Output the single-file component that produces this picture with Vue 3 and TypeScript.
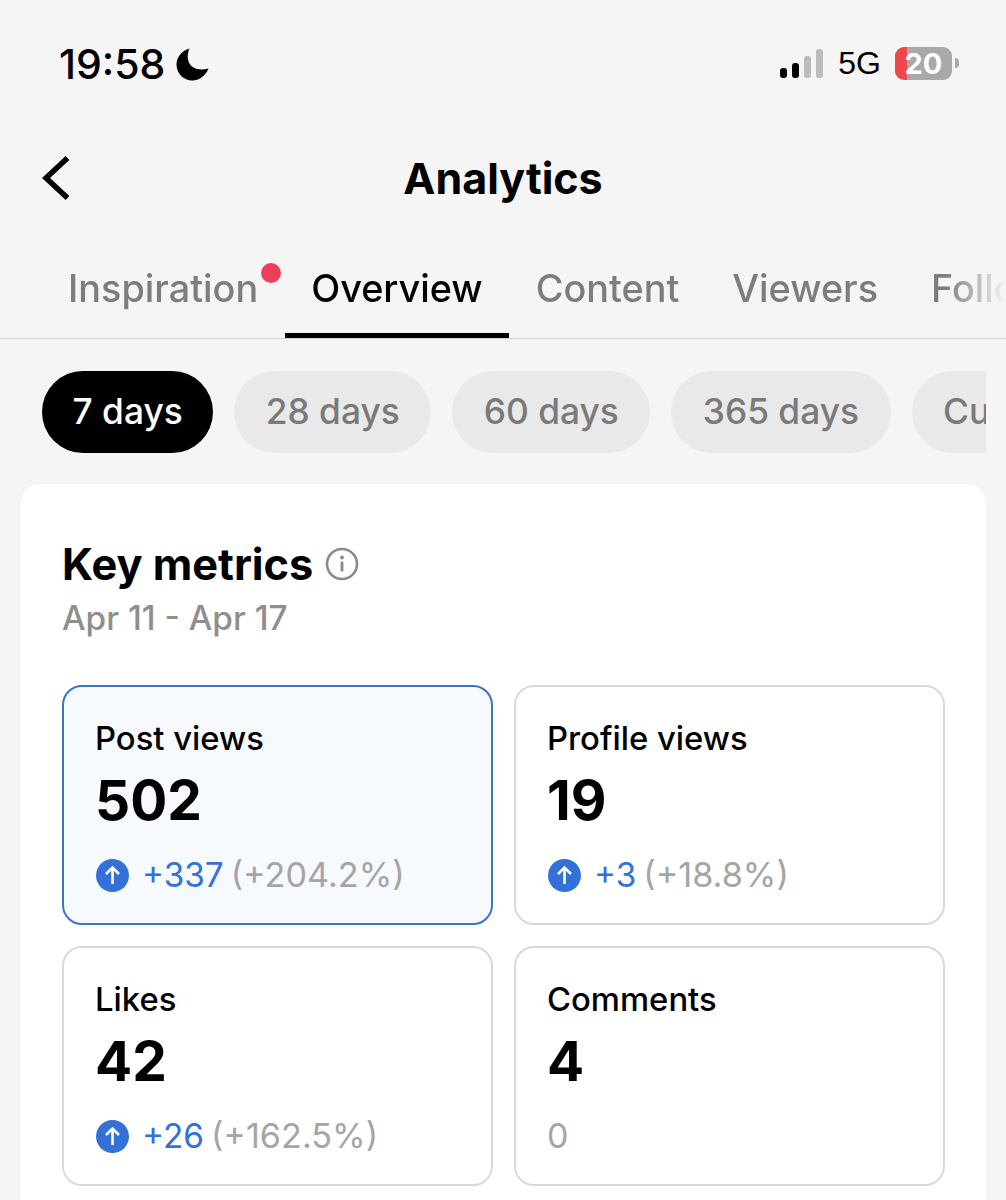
<script setup lang="ts">
// Analytics overview screen: status bar, header, tabs, range pills, key metrics card
interface Metric {
  label: string
  value: string
  delta: string
  pct?: string
  active?: boolean
}

const tabs = ['Inspiration', 'Overview', 'Content', 'Viewers', 'Followers']
const ranges = ['7 days', '28 days', '60 days', '365 days', 'Custom']

const metrics: Metric[] = [
  { label: 'Post views', value: '502', delta: '+337', pct: '(+204.2%)', active: true },
  { label: 'Profile views', value: '19', delta: '+3', pct: '(+18.8%)' },
  { label: 'Likes', value: '42', delta: '+26', pct: '(+162.5%)' },
  { label: 'Comments', value: '4', delta: '0' },
]
const signalBars = [10, 15, 22, 29]
</script>

<template>
  <div class="screen">
    <div class="status">
      <div class="status__left">
        <span class="status__time">19:58</span>
        <svg class="moon" width="33" height="33" viewBox="0 0 33 33">
          <path d="M13.5 0.5C8.5 12 14 25 32.5 20.5C29.5 28 23 32.5 16.5 32.5C7.5 32.5 0.5 25.5 0.5 16.5C0.5 9 6 2.5 13.5 0.5Z" fill="#000" />
        </svg>
      </div>
      <div class="status__right">
        <div class="signal">
          <span
            v-for="(h, i) in signalBars"
            :key="i"
            class="signal__bar"
            :class="{ 'signal__bar--off': i > 1 }"
            :style="{ height: h + 'px' }"
          />
        </div>
        <span class="status__net">5G</span>
        <div class="battery"><span>20</span></div>
        <span class="battery__tip" />
      </div>
    </div>

    <header class="head">
      <svg class="back" width="30" height="46" viewBox="0 0 30 46">
        <path d="M25.5 3L4 23L25.5 43" fill="none" stroke="#000" stroke-width="5.5" />
      </svg>
      <h1>Analytics</h1>
    </header>

    <nav class="tabs">
      <div class="tabs__inner">
        <div
          v-for="(t, i) in tabs"
          :key="t"
          class="tab"
          :class="{ 'tab--on': i === 1 }"
        >
          {{ t }}
          <span v-if="i === 0" class="tab__dot" />
        </div>
      </div>
    </nav>

    <div class="ranges">
      <div
        v-for="(r, i) in ranges"
        :key="r"
        class="pill"
        :class="{ 'pill--on': i === 0 }"
      >{{ r }}</div>
    </div>

    <section class="card">
      <div class="card__title">
        <h2>Key metrics</h2>
        <svg width="34" height="34" viewBox="0 0 34 34">
          <circle cx="17" cy="17" r="15" fill="none" stroke="#8a8a8a" stroke-width="2.6" />
          <circle cx="17" cy="10.5" r="1.9" fill="#8a8a8a" />
          <rect x="15.6" y="14.5" width="2.8" height="10" rx="1" fill="#8a8a8a" />
        </svg>
      </div>
      <div class="card__date">Apr 11 - Apr 17</div>

      <div class="grid">
        <div
          v-for="m in metrics"
          :key="m.label"
          class="metric"
          :class="{ 'metric--on': m.active }"
        >
          <div class="metric__label">{{ m.label }}</div>
          <div class="metric__value">{{ m.value }}</div>
          <div class="metric__delta">
            <template v-if="m.pct">
              <svg class="metric__arrow" width="33" height="33" viewBox="0 0 33 33">
                <circle cx="16.5" cy="16.5" r="16.5" fill="#3371d9" />
                <path d="M16.5 25V9M10 15L16.5 8.5L23 15" fill="none" stroke="#fff" stroke-width="2.6" />
              </svg>
              <span class="metric__num">{{ m.delta }}</span>
              <span class="metric__pct">{{ m.pct }}</span>
            </template>
            <span v-else class="metric__zero">{{ m.delta }}</span>
          </div>
        </div>
      </div>
    </section>
  </div>
</template>

<style>
body { background: #f5f5f5; }
</style>

<style scoped>
.screen {
  width: 1006px;
  height: 1200px;
  overflow: hidden;
  background: #f5f5f5;
  font-family: Inter, "Liberation Sans", sans-serif;
  color: #000;
}

.status {
  height: 130px;
  padding: 44px 47px 0 59px;
  box-sizing: border-box;
  display: flex;
  justify-content: space-between;
  align-items: flex-start;
}
.status__left { display: flex; align-items: center; gap: 11px; height: 40px; }
.status__time { font-size: 41px; font-weight: 500; line-height: 40px; }
.status__right { display: flex; align-items: flex-end; height: 36px; }
.signal { display: flex; align-items: flex-end; gap: 5px; margin: 0 15px 2px 0; }
.signal__bar { width: 7px; border-radius: 3px; background: #000; }
.signal__bar--off { background: #bcbcbc; }
.status__net {
  font-family: "Liberation Sans", sans-serif;
  font-size: 32px;
  line-height: 33px;
  margin-right: 14px;
}
.battery {
  width: 57px;
  height: 33px;
  border-radius: 9px;
  background: linear-gradient(90deg, #ee4848 12px, #a9a9a9 12px);
  color: #fff;
  font-size: 29px;
  font-weight: 700;
  line-height: 33px;
  text-align: center;
}
.battery__tip {
  width: 4px;
  height: 10px;
  margin: 0 0 12px 3px;
  border-radius: 0 4px 4px 0;
  background: #a9a9a9;
}

.head {
  height: 96px;
  position: relative;
  display: flex;
  align-items: center;
  justify-content: center;
}
.head h1 { margin: 0; font-size: 43px; font-weight: 700; line-height: 96px; }
.back { position: absolute; left: 42px; top: 25px; }

.tabs {
  height: 113px;
  box-sizing: border-box;
  border-bottom: 1px solid #d2d2d2;
  overflow: hidden;
}
.tabs__inner {
  display: flex;
  height: 112px;
  padding-left: 41.5px;
  -webkit-mask-image: linear-gradient(90deg, #000 945px, transparent 1006px);
  mask-image: linear-gradient(90deg, #000 945px, transparent 1006px);
}
.tab {
  position: relative;
  flex-shrink: 0;
  height: 112px;
  box-sizing: border-box;
  padding: 39px 26.5px 0;
  font-size: 37.8px;
  font-weight: 500;
  line-height: 46px;
  color: #7d7d7d;
  white-space: nowrap;
}
.tab--on { color: #000; border-bottom: 5px solid #000; }
.tab__dot {
  position: absolute;
  right: 4px;
  top: 37px;
  width: 20px;
  height: 20px;
  border-radius: 50%;
  background: #ee3f58;
}

.ranges {
  display: flex;
  gap: 21px;
  margin: 32px 20px 0 42px;
  overflow: hidden;
}
.pill {
  flex-shrink: 0;
  height: 82px;
  padding: 0 31.5px;
  border-radius: 41px;
  background: #e9e9e9;
  color: #7a7a7a;
  font-size: 35.3px;
  font-weight: 500;
  line-height: 82px;
}
.pill--on { background: #000; color: #fff; padding: 0 30.5px; }

.card {
  margin: 31px 20px 0 21px;
  padding: 55px 41px 40px 41px;
  border-radius: 20px 20px 0 0;
  background: #fff;
  min-height: 716px;
  box-sizing: border-box;
}
.card__title { display: flex; align-items: center; gap: 12px; height: 50px; }
.card__title h2 { margin: 0; font-size: 43.3px; font-weight: 700; line-height: 50px; }
.card__date {
  margin-top: 9px;
  font-size: 33.3px;
  font-weight: 500;
  line-height: 40px;
  color: #8e8e8e;
}

.grid {
  display: grid;
  grid-template-columns: 431px 431px;
  gap: 21px;
  margin-top: 47px;
}
.metric {
  height: 240px;
  box-sizing: border-box;
  padding: 31px 31px 0;
  border: 2px solid #d9d9d9;
  border-radius: 20px;
  background: #fff;
}
.metric--on { background: #f6f9fe; border-color: #3a76c6; }
.metric__label { font-size: 32.8px; font-weight: 500; line-height: 40px; }
.metric__value { font-size: 55px; font-weight: 700; line-height: 70px; margin-top: 7px; }
.metric__delta {
  display: flex;
  align-items: center;
  height: 40px;
  margin-top: 20px;
  font-size: 34px;
  line-height: 40px;
}
.metric__arrow { margin-left: 1px; }
.metric__num { color: #3371d9; margin-left: 13px; font-size: 33.3px; }
.metric__pct { color: #a5a5a5; margin-left: 7px; font-size: 34.2px; }
.metric__zero { color: #a5a5a5; }
</style>
